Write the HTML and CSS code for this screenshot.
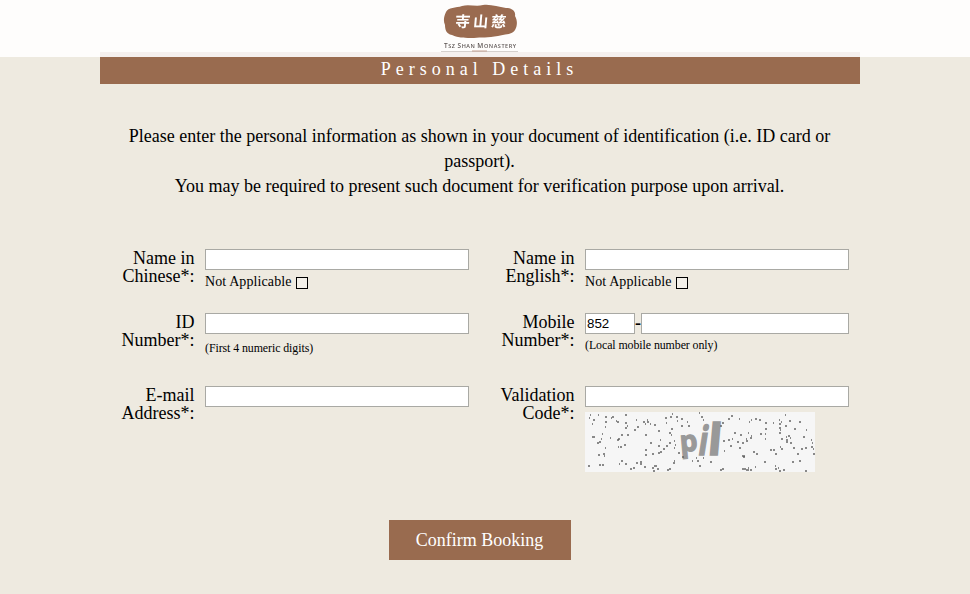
FILE: index.html
```html
<!DOCTYPE html>
<html lang="en">
<head>
    <meta charset="UTF-8">
    <meta name="viewport" content="width=device-width, initial-scale=1.0">
    <title>Tsz Shan Monastery</title>
    <link rel="stylesheet" href="styles.css">
</head>
<body>

    <div class="header">
        <svg class="logo" width="84" height="54" viewBox="0 0 84 54">
            <path class="seal" d="M8 12 C10 7 18 8 24 6 C31 4 38 7 45 5 C53 4 60 7 68 8 C74 8 78 11 77 16 C80 21 79 27 77 30 C74 35 66 34 60 36 C50 38 43 37 36 38 C28 38 20 38 14 35 C8 34 7 29 7 25 C5 21 6 16 8 12Z"/>
            <g transform="skewX(-5) translate(2 0)">
                <text class="seal-text" x="17" y="27">寺</text>
                <text class="seal-text" x="35" y="27">山</text>
                <text class="seal-text" x="53" y="27">慈</text>
            </g>
            <text class="logo-name" x="6" y="48" textLength="72"><tspan class="cap">T</tspan>SZ <tspan class="cap">S</tspan>HAN <tspan class="cap">M</tspan>ONASTERY</text>
            <path class="logo-line" d="M3 51.5H80"/>
            <path class="logo-mark" d="M34 51H49"/>
        </svg>
    </div>

    <div class="container">
        <h1 class="title">Personal Details</h1>

        <p class="intro">
            Please enter the personal information as shown in your document of identification (i.e. ID card or passport).<br>
            You may be required to present such document for verification purpose upon arrival.
        </p>

        <form class="form">
            <div class="row row-name">
                <label class="label" for="nameChi">Name in Chinese*:</label>
                <div class="field">
                    <input type="text" class="input" id="nameChi">
                    <label class="na">Not Applicable<input type="checkbox" class="check"></label>
                </div>
                <label class="label" for="nameEng">Name in English*:</label>
                <div class="field">
                    <input type="text" class="input" id="nameEng">
                    <label class="na">Not Applicable<input type="checkbox" class="check"></label>
                </div>
            </div>
            <div class="row row-id">
                <label class="label" for="idNo">ID Number*:</label>
                <div class="field">
                    <input type="text" class="input" id="idNo">
                    <div class="hint hint-id">(First 4 numeric digits)</div>
                </div>
                <label class="label" for="mobile">Mobile Number*:</label>
                <div class="field">
                    <div class="phone">
                        <input type="text" class="input area" value="852">
                        <span class="dash">-</span>
                        <input type="text" class="input" id="mobile">
                    </div>
                    <div class="hint">(Local mobile number only)</div>
                </div>
            </div>
            <div class="row row-code">
                <label class="label" for="email">E-mail Address*:</label>
                <div class="field">
                    <input type="text" class="input" id="email">
                </div>
                <label class="label" for="code">Validation Code*:</label>
                <div class="field">
                    <input type="text" class="input" id="code">
                    <svg class="captcha" width="230" height="60" viewBox="0 0 230 60">
                        <g class="captcha-text">
                            <text transform="translate(95.5 40) rotate(-5) scale(.88 .92)">p</text>
                            <text transform="translate(112 43) skewX(-9) scale(.95 1.25)">i</text>
                            <text transform="translate(122 43) skewX(-5) scale(1.4 1.36)">l</text>
                        </g>
                        <path class="noise" d="M5 3h1M4 6h1M8 8h2M13 3h1M20 5h2M20 10h2M20 15h1M26 6h1M27 5h2M31 9h1M32 10h2M40 3h2M40 11h2M42 14h1M40 16h2M7 12h1M7 25h3M17 22h1M16 27h1M14 30h2M12 31h2M25 26h1M20 36h1M18 42h2M19 44h1M13 43h2M36 23h2M42 23h2M32 28h2M33 27h2M39 33h2M33 35h1M35 35h2M51 8h1M49 18h2M52 15h2M58 10h2M60 12h1M62 8h1M62 10h2M65 12h1M69 13h2M73 19h2M60 23h2M65 31h2M75 28h1M73 34h2M60 38h2M60 43h2M67 42h2M73 41h2M75 40h2M3 54h2M14 53h2M17 53h2M36 49h2M34 52h1M40 52h2M45 57h2M48 56h2M51 51h2M55 50h2M55 52h2M59 55h2M67 56h2M69 54h3M72 57h2M68 59h2"/>
                        <path class="noise" d="M87 2h1M91 5h2M92 9h1M85 5h2M80 6h2M81 11h1M96 14h2M96 7h2M102 10h1M103 14h2M86 17h2M86 23h1M84 21h2M89 29h1M90 33h1M84 31h2M81 34h2M78 37h2M89 36h1M93 41h2M97 45h2M89 49h1M88 51h2M84 57h2M82 58h2M114 1h1M116 5h2M118 8h1M146 4h2M143 7h2M154 7h1M137 11h2M135 14h2M152 30h2M143 28h2M138 29h2M147 27h1M149 21h2M145 34h2M139 39h1M111 46h1M112 49h2M114 54h2M107 49h1M118 46h1M125 50h2M135 58h2M137 57h2"/>
                        <path class="noise" d="M200 3h1M170 7h2M166 8h1M164 10h1M174 8h2M180 11h2M194 8h1M194 12h2M196 10h1M204 9h2M214 10h2M200 14h2M188 11h1M194 16h2M194 21h2M195 18h1M209 17h2M221 18h1M180 17h2M180 22h1M180 27h1M175 22h2M163 21h1M166 24h1M165 26h2M155 23h2M161 27h1M161 29h2M157 31h2M154 36h2M157 44h3M158 45h2M168 40h2M171 42h2M196 27h2M201 25h1M201 28h2M201 30h2M203 24h2M205 26h1M205 31h2M218 25h2M195 35h1M196 37h2M208 36h2M216 37h2M220 36h2M212 42h2M188 38h2M185 38h2M190 42h2M226 28h1M227 31h1M226 35h2M228 37h1M228 42h2M179 50h2M207 50h2M214 49h2M157 57h4M161 58h3M163 56h1M165 58h2M190 54h1M190 57h2M193 56h1M170 55h1M194 59h2M198 58h2M220 59h2"/>
                    </svg>
                </div>
            </div>
            <button type="button" class="confirm">Confirm Booking</button>
        </form>
    </div>

</body>
</html>
```
FILE: styles.css
```css
body {
    margin: 0;
    padding: 52px 0 0;
    background-color: #eeeae0;
    color: #000;
    font-family: "Liberation Serif", "Times New Roman", serif;
    font-size: 18px;
    overflow: hidden;
}
.header {
    position: fixed;
    top: 0;
    left: 0;
    width: 100%;
    height: 57px;
    background-color: rgba(255, 255, 255, 0.9);
    z-index: 10;
}
.logo {
    display: block;
    margin: 0 auto;
    transform: translateX(-5px);
}
.seal {
    fill: #9a6b50;
}
.seal-text {
    fill: #fff;
    font-family: "Noto Sans CJK TC", sans-serif;
    font-size: 15px;
    font-weight: bold;
}
.logo-name {
    fill: #5d5553;
    font-family: "Open Sans", sans-serif;
    font-size: 5.5px;
    font-weight: 600;
}
.cap {
    font-size: 6.5px;
}
.logo-line {
    stroke: #d5d0cd;
}
.logo-mark {
    stroke: #c3a091;
}
.container {
    width: 760px;
    margin-left: 100px;
}
.title {
    box-sizing: border-box;
    margin: 0;
    height: 32px;
    padding-right: 1px;
    line-height: 34px;
    background-color: #996b4f;
    color: #fff;
    font-size: 18px;
    font-weight: normal;
    letter-spacing: 5px;
    text-align: center;
}
.intro {
    margin: 40px 0 0;
    padding: 0 21px 0 20px;
    line-height: 25px;
    text-align: center;
}
.form {
    padding-top: 50px;
}
.row {
    display: grid;
    grid-template-columns: 95px 264px 96px 264px;
    column-gap: 10px;
}
.row-name {
    height: 64px;
}
.row-id {
    height: 73px;
}
.row-code {
    height: 134px;
}
.label {
    justify-self: end;
    width: 80px;
    padding-right: 0.5px;
    line-height: 18px;
    text-align: right;
}
.input {
    display: block;
    box-sizing: border-box;
    width: 100%;
    height: 21px;
    padding: 1px;
    border: 1px solid #a9a9a4;
    background-color: #fff;
    font-family: "Liberation Sans", Arial, sans-serif;
    font-size: 13.33px;
}
.area {
    flex: none;
    width: 50px;
}
.na {
    display: flex;
    align-items: center;
    height: 24px;
    font-size: 14px;
    letter-spacing: 0.1px;
}
.check {
    appearance: none;
    box-sizing: border-box;
    width: 12px;
    height: 12px;
    margin: 2px 0 0 4px;
    border: 1px solid #000;
    background-color: #f3f0e9;
}
.phone {
    display: flex;
}
.dash {
    flex: none;
    width: 6px;
    font-weight: bold;
    line-height: 20px;
}
.hint {
    padding-top: 4px;
    font-size: 11.9px;
    letter-spacing: -0.08px;
    line-height: 14px;
}
.hint-id {
    padding-top: 7px;
}
.captcha {
    display: block;
    margin-top: 5px;
    background-color: #f6f6f6;
    overflow: visible;
}
.captcha-text {
    fill: #999;
    stroke: #999;
    stroke-width: 1.2;
    font-family: "Open Sans", sans-serif;
    font-size: 32px;
    font-weight: bold;
}
.noise {
    stroke: #666;
    stroke-width: 1.3;
}
.confirm {
    display: block;
    width: 182px;
    height: 40px;
    margin: 0 auto;
    padding: 0 1px 0 0;
    border: 0;
    background-color: #996b4f;
    color: #fff;
    font-family: inherit;
    font-size: 18px;
}
```
